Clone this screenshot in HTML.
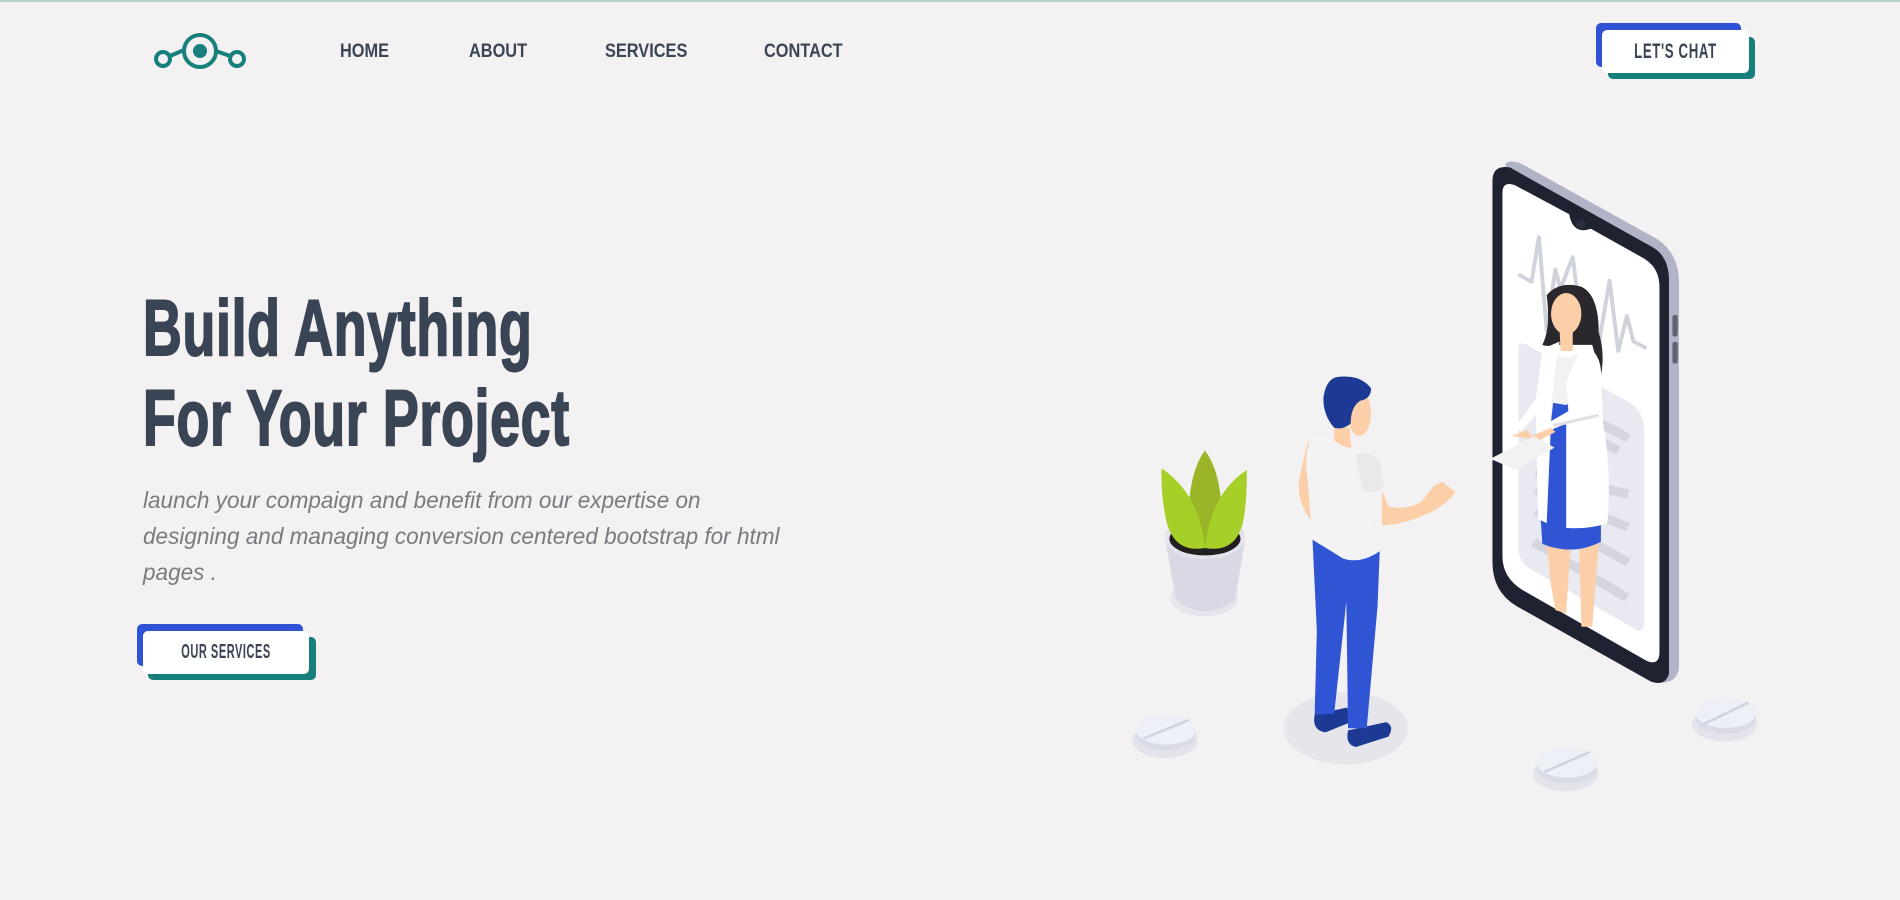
<!DOCTYPE html>
<html><head><meta charset="utf-8"><style>
*{margin:0;padding:0;box-sizing:border-box}
body{width:1900px;height:900px;background:#f3f1f2;position:relative;overflow:hidden;font-family:"Liberation Sans",sans-serif}
.top{position:absolute;left:0;top:0;width:1900px;height:2px;background:#b7d3ce}
.nav{position:absolute;top:41px;font-size:19px;font-weight:bold;color:#3a4556;transform:scaleX(.86);transform-origin:left}
.h{position:absolute;left:143px;font-size:79px;font-weight:bold;color:#394454;transform:scaleX(.68);transform-origin:left;white-space:nowrap;line-height:1;letter-spacing:1px;-webkit-text-stroke:2px #394454}
.p{position:absolute;left:143px;font-size:23px;font-style:italic;color:#7b7a80;transform:scaleX(.98);transform-origin:left;white-space:nowrap}
.btn{position:absolute}
.btn div{position:absolute;border-radius:5px}
.btn span{position:absolute;font-weight:bold;color:#394454;white-space:nowrap;letter-spacing:1px;text-align:center}
</style></head><body>
<div class="top"></div>
<svg style="position:absolute;left:150px;top:30px" width="100" height="44" viewBox="0 0 100 44">
<g fill="none" stroke="#17807d" stroke-width="4">
<circle cx="13" cy="29" r="7"/><circle cx="87" cy="29" r="7"/><circle cx="50" cy="21" r="16"/>
<line x1="20" y1="26" x2="34" y2="20"/><line x1="66" y1="21" x2="80" y2="26"/></g>
<circle cx="50" cy="21" r="7" fill="#17807d"/></svg>
<div class="nav" style="left:340px">HOME</div>
<div class="nav" style="left:469px">ABOUT</div>
<div class="nav" style="left:605px">SERVICES</div>
<div class="nav" style="left:764px">CONTACT</div>

<div class="btn" style="left:1596px;top:23px">
<div style="left:0;top:0;width:145px;height:44px;background:#3053d5"></div>
<div style="left:12px;top:14px;width:147px;height:42px;background:#177f7b"></div>
<div style="left:6px;top:7px;width:147px;height:43px;background:#fff"></div>
<span style="left:6px;top:17px;width:147px;font-size:21px;transform:scaleX(.63)">LET'S CHAT</span>
</div>

<div class="h" style="top:288px">Build Anything</div>
<div class="h" style="top:378px">For Your Project</div>
<div class="p" style="top:487px">launch your compaign and benefit from our expertise on</div>
<div class="p" style="top:523px">designing and managing conversion centered bootstrap for html</div>
<div class="p" style="top:559px">pages .</div>

<div class="btn" style="left:137px;top:624px">
<div style="left:0;top:0;width:166px;height:42px;background:#3053d5"></div>
<div style="left:11px;top:13px;width:168px;height:43px;background:#177f7b"></div>
<div style="left:6px;top:7px;width:166px;height:43px;background:#fff"></div>
<span style="left:6px;top:17px;width:166px;font-size:20px;transform:scaleX(.55)">OUR SERVICES</span>
</div>

<svg style="position:absolute;left:1100px;top:150px" width="680" height="650" viewBox="0 0 1568 1568" preserveAspectRatio="none">
<ellipse cx="567" cy="1395" rx="143" ry="87" fill="#e6e5ec"/>
<g><ellipse cx="150" cy="1425" rx="75" ry="42" fill="#e3e3ec"/><ellipse cx="152" cy="1410" rx="70" ry="38" fill="#d9dbe8"/><ellipse cx="152" cy="1398" rx="70" ry="36" fill="#eef0f7"/><line x1="100" y1="1420" x2="205" y2="1375" stroke="#d0d2de" stroke-width="6"/></g>
<g><ellipse cx="1073" cy="1505" rx="75" ry="42" fill="#e3e3ec"/><ellipse cx="1077" cy="1490" rx="70" ry="38" fill="#d9dbe8"/><ellipse cx="1077" cy="1478" rx="70" ry="36" fill="#eef0f7"/><line x1="1025" y1="1500" x2="1130" y2="1452" stroke="#d0d2de" stroke-width="6"/></g>
<g><ellipse cx="1440" cy="1385" rx="75" ry="42" fill="#e3e3ec"/><ellipse cx="1443" cy="1370" rx="70" ry="38" fill="#d9dbe8"/><ellipse cx="1443" cy="1358" rx="70" ry="36" fill="#eef0f7"/><line x1="1392" y1="1385" x2="1495" y2="1333" stroke="#d0d2de" stroke-width="6"/></g>
<ellipse cx="240" cy="1080" rx="78" ry="45" fill="#e6e5ec"/>
<path d="M150 935 L175 1085 Q240 1140 312 1085 L335 935 Z" fill="#d8d9e4"/>
<ellipse cx="242" cy="935" rx="93" ry="52" fill="#e2e3ec"/>
<ellipse cx="242" cy="938" rx="82" ry="40" fill="#231f20"/>
<path d="M242 725 Q290 790 280 960 L205 960 Q195 790 242 725 Z" fill="#9ab527"/>
<path d="M142 768 Q230 830 242 960 Q165 975 150 880 Q140 820 142 768 Z" fill="#a6cf27"/>
<path d="M338 772 Q255 830 242 960 Q320 975 333 880 Q340 820 338 772 Z" fill="#a6cf27"/>
<path d="M935 32 Q950 22 975 35 L1285 215 Q1335 250 1335 320 L1335 1250 Q1330 1285 1295 1285 L960 1090 Z" fill="#b1b4c6"/>
<path d="M905 75 Q905 35 945 42 L1275 235 Q1312 258 1312 315 L1312 1262 Q1305 1295 1270 1282 L960 1100 Q905 1065 905 995 Z" fill="#1f2230"/>
<path d="M928 100 Q930 75 957 85 L1082 155 Q1090 205 1132 190 L1255 262 Q1290 285 1290 330 L1290 1215 Q1288 1245 1260 1232 L975 1062 Q928 1032 928 980 Z" fill="#fff"/>
<circle cx="1108" cy="180" r="11" fill="#2b2e3c"/>
<rect x="1320" y="398" width="12" height="52" rx="5" fill="#5e6170"/>
<rect x="1320" y="463" width="12" height="52" rx="5" fill="#5e6170"/>
<polyline points="965,300 995,318 1012,210 1030,435 1050,288 1062,335 1090,258 1110,420 1150,470 1175,315 1195,485 1215,400 1230,462 1260,478" fill="none" stroke="#d0d2dc" stroke-width="9" stroke-linejoin="round"/>
<path d="M965 478 Q965 460 985 470 L1225 612 Q1255 635 1255 680 L1255 1145 Q1252 1168 1232 1155 L995 1012 Q965 995 965 960 Z" fill="#e8e9f1"/>
<g stroke="#d4d5df" stroke-width="22">
<line x1="1155" y1="660" x2="1218" y2="695"/><line x1="1150" y1="700" x2="1195" y2="725"/>
<line x1="1005" y1="780" x2="1218" y2="830"/><line x1="1005" y1="820" x2="1218" y2="910"/>
<line x1="1005" y1="870" x2="1218" y2="995"/><line x1="1000" y1="945" x2="1215" y2="1080"/>
</g>
<path d="M1040 1050 L1050 1110 L1075 1118 L1085 960 L1105 960 L1110 1150 L1135 1150 L1150 950 L1030 950 Z" fill="#fccfa9"/>
<path d="M1045 610 L1080 610 L1155 830 L1155 945 Q1090 980 1020 950 L1015 870 Z" fill="#3055d4"/>
<path d="M1030 350 Q1060 315 1110 330 Q1150 350 1150 440 Q1165 490 1155 545 L1135 470 L1060 470 Q1030 475 1020 470 Q1040 430 1030 350 Z" fill="#2a272d"/>
<ellipse cx="1075" cy="395" rx="35" ry="50" fill="#fccfa9"/>
<path d="M1060 440 L1090 440 L1090 485 L1062 485 Z" fill="#fccfa9"/>
<path d="M1040 480 Q1075 520 1115 480 L1150 560 L1075 615 L1045 610 Z" fill="#f2f2f3"/>
<path d="M1020 480 L1060 462 L1050 520 L1042 610 L1030 900 L1010 890 L1005 640 L970 680 L960 665 L1005 600 Z" fill="#fff"/>
<path d="M1110 470 Q1150 480 1155 530 L1160 660 Q1180 770 1170 900 Q1130 915 1075 912 L1075 660 L1040 675 L1030 660 L1080 630 L1075 560 Z" fill="#fff"/>
<path d="M1045 665 L1150 640" stroke="#e2e2e6" stroke-width="8"/>
<path d="M950 690 L985 675 L995 690 L1040 670 L1050 680 L1015 700 Z" fill="#fccfa9"/>
<path d="M900 745 L1000 690 L1048 718 L960 772 Z" fill="#f2f2f2"/>
<path d="M495 1362 L570 1345 L578 1380 L520 1405 Q488 1400 495 1362 Z" fill="#1c3a94"/>
<path d="M572 1400 L660 1380 Q680 1390 665 1415 L590 1440 Q565 1435 572 1400 Z" fill="#1c3a94"/>
<path d="M490 940 Q560 990 645 968 L640 1100 L615 1395 L572 1395 L568 1090 L540 1360 L495 1362 L500 1160 Z" fill="#3055d4"/>
<path d="M650 820 L665 860 Q700 870 740 850 L770 810 L790 800 L800 810 L820 825 Q800 855 760 875 Q700 905 650 905 Z" fill="#fccfa9"/>
<path d="M480 700 L460 790 Q450 850 495 905 L500 860 Z" fill="#fccfa9"/>
<path d="M540 665 L575 670 L580 720 L540 712 Z" fill="#fccfa9"/>
<ellipse cx="598" cy="635" rx="27" ry="55" fill="#fccfa9"/>
<path d="M545 548 Q600 540 625 575 Q625 600 600 605 Q578 620 578 660 Q560 676 540 670 Q515 640 515 600 Q520 555 545 548 Z" fill="#1c3a94"/>
<path d="M490 692 Q530 690 540 700 Q560 720 585 718 L600 725 Q640 730 655 815 Q635 830 610 825 L645 968 Q600 1000 560 985 L490 940 L478 790 Q470 720 490 692 Z" fill="#f3f3f4"/>
<path d="M590 735 Q630 720 648 760 L655 815 Q630 830 605 822 Z" fill="#e9e9ea"/>
</svg>
</body></html>
